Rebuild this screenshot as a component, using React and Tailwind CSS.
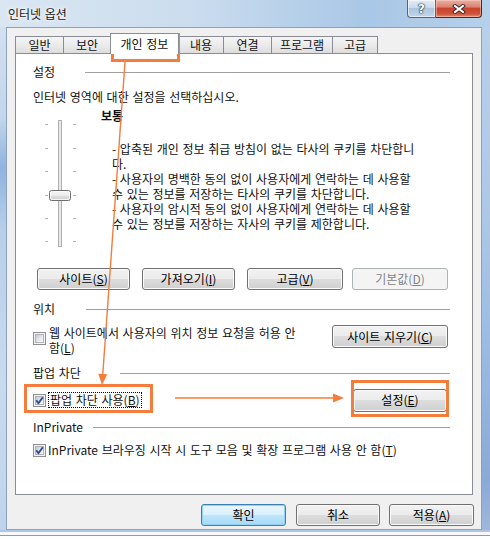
import React from "react";

function Btn({ children, className = "", disabled = false, def = false }) {
  let style;
  if (disabled) style = "border-[#adb2b5] bg-[#f4f4f4] text-[#838383]";
  else if (def)
    style =
      "border-[#3c7fb1] bg-[linear-gradient(#eaf6fd,#d9f0fc_50%,#bee6fd_50%,#a7d9f5)] shadow-[inset_0_0_0_1px_#8fd3f7] text-black";
  else
    style =
      "border-[#707070] bg-[linear-gradient(#f2f2f2,#ebebeb_50%,#dddddd_50%,#cfcfcf)] shadow-[inset_0_0_0_1px_#fbfbfb] text-black";
  return (
    <div className={`flex shrink-0 items-center justify-center rounded-[3px] border leading-none ${style} ${className}`}>
      {children}
    </div>
  );
}

function Check({ checked }) {
  return (
    <div className="relative h-[13px] w-[13px] shrink-0 border border-[#8f8f8f] bg-[#f4f4f4] p-px">
      <div className="h-full w-full border border-[#aeb3b9] bg-[linear-gradient(135deg,#c6cad0,#e4e6e9_50%,#f8f8f8)]" />
      {checked && (
        <svg className="absolute left-0 top-0" width="11" height="11" viewBox="0 0 11 11">
          <path d="M2.3 5.2 L4.4 8.2 L8.8 2.2" fill="none" stroke="#2a4a9a" strokeWidth="1.9" strokeLinejoin="round" />
        </svg>
      )}
    </div>
  );
}

function Group({ label, w, className = "" }) {
  return (
    <div className={`flex h-[20px] items-center ${className}`}>
      <div className={`shrink-0 leading-[16px] ${w}`}>{label}</div>
      <div className="h-px flex-1 bg-[#a0a0a0]" />
    </div>
  );
}

function Tab({ children, w, selected = false, noLeft = false, last = false }) {
  if (selected) {
    return (
      <div className={`relative z-10 -mb-px flex h-[21px] items-center justify-center border border-b-0 border-[#898c95] bg-white ${w}`}>
        {children}
      </div>
    );
  }
  return (
    <div
      className={`flex h-[17px] items-center justify-center border-t border-[#898c95] bg-[linear-gradient(#f5f5f5,#ebebeb_50%,#dddddd)] ${
        noLeft ? "" : "border-l"
      } ${last ? "border-r" : ""} ${w}`}
    >
      {children}
    </div>
  );
}

export default function App() {
  return (
    <div className="relative h-[539px] w-[490px] overflow-hidden bg-white font-['Noto_Sans_CJK_KR',sans-serif] text-[12px] text-[#111111] [word-spacing:1px]">
      {/* Title bar */}
      <div className="flex h-[27px] bg-[linear-gradient(90deg,#dae6f2,#cadcee_40%,#a9c7e6_75%,#b6d0ea)]">
        <div className="pl-[8px] pt-[6px] leading-[16px] text-[#1a1a1a] [text-shadow:0_0_6px_#ffffff,0_0_3px_#ffffff]">
          인터넷 옵션
        </div>
        <div className="ml-auto mr-[8px] flex items-start">
          <div className="flex h-[18px] w-[29px] items-center justify-center rounded-bl-[4px] border border-t-0 border-[#52677f] bg-[linear-gradient(#e4edf6,#cbdaea_45%,#aec5df_50%,#c0d6ec)] shadow-[inset_0_0_0_1px_rgba(255,255,255,0.55)]">
            <span className="font-['DejaVu_Sans',sans-serif] text-[12px] font-bold leading-none text-white [text-shadow:0_0_1px_#1c2a3a,0_0_2px_#1c2a3a,0_0_1px_#1c2a3a]">
              ?
            </span>
          </div>
          <div className="flex h-[18px] w-[46px] items-center justify-center rounded-br-[4px] border border-l-0 border-t-0 border-[#4a2a26] bg-[linear-gradient(#eab0a3,#dc8270_40%,#c8442d_50%,#cf5236_80%,#e28a6c)] shadow-[inset_0_0_0_1px_rgba(255,220,210,0.45)]">
            <svg width="14" height="10" viewBox="0 0 14 10">
              <path d="M3 2 L11 8 M11 2 L3 8" stroke="#3a2a2a" strokeWidth="4" strokeLinecap="square" />
              <path d="M3 2 L11 8 M11 2 L3 8" stroke="#ffffff" strokeWidth="2" strokeLinecap="square" />
            </svg>
          </div>
        </div>
      </div>

      {/* Body with frames */}
      <div className="flex h-[503px]">
        <div className="w-[6px] bg-[linear-gradient(#d2e0ef,#c3d6ec_18%,#8fb4de_28%,#b7cfe9_40%,#c8daee_70%,#bfd4ec)]" />
        <div className="flex w-[476px] flex-col border border-[#8da2bd] bg-[#f0f0f0] px-[8px]">
          {/* Tabs */}
          <div className="mt-[5px] flex h-[20px] items-end">
            <Tab w="w-[48px]">일반</Tab>
            <Tab w="w-[47px]">보안</Tab>
            <Tab w="w-[69px]" selected>
              개인 정보
            </Tab>
            <Tab w="w-[44px]" noLeft>
              내용
            </Tab>
            <Tab w="w-[48px]">연결</Tab>
            <Tab w="w-[61px]">프로그램</Tab>
            <Tab w="w-[46px]" last>
              고급
            </Tab>
          </div>

          {/* Panel */}
          <div className="flex h-[442px] flex-col border border-[#898c95] bg-white pl-[17px] pr-[22px]">
            <Group label="설정" w="w-[52px]" className="mt-[8px]" />
            <div className="mt-[6px] h-[18px] leading-[18px]">인터넷 영역에 대한 설정을 선택하십시오.</div>

            {/* Slider section */}
            <div className="flex h-[150px]">
              <svg className="ml-[10px] shrink-0" width="36" height="150" viewBox="0 0 36 150">
                <defs>
                  <linearGradient id="thumb" x1="0" y1="0" x2="0" y2="1">
                    <stop offset="0" stopColor="#f7f7f7" />
                    <stop offset="0.5" stopColor="#ececec" />
                    <stop offset="0.5" stopColor="#dedede" />
                    <stop offset="1" stopColor="#d2d2d2" />
                  </linearGradient>
                </defs>
                {[18, 42, 65, 89, 112, 135].map((y) => (
                  <g key={y}>
                    <rect x="2" y={y} width="3" height="1" fill="#b4b4b4" />
                    <rect x="30" y={y} width="3" height="1" fill="#b4b4b4" />
                  </g>
                ))}
                <rect x="15.5" y="14.5" width="3" height="126" fill="#e8e8e8" stroke="#b0b0b0" />
                <rect x="6.5" y="84.5" width="21" height="10" rx="2" fill="url(#thumb)" stroke="#707070" />
                <rect x="7.5" y="85.5" width="19" height="8" rx="1.5" fill="none" stroke="#fbfbfb" strokeOpacity="0.8" />
              </svg>
              <div className="ml-[21px] flex flex-col">
                <div className="mt-[2px] h-[16px] pl-[1px] font-bold leading-[16px]">보통</div>
                <div className="mt-[17px] whitespace-nowrap pl-[12px] leading-[15px]">
                  <div>- 압축된 개인 정보 취급 방침이 없는 타사의 쿠키를 차단합니</div>
                  <div>다.</div>
                  <div>- 사용자의 명백한 동의 없이 사용자에게 연락하는 데 사용할</div>
                  <div>수 있는 정보를 저장하는 타사의 쿠키를 차단합니다.</div>
                  <div>- 사용자의 암시적 동의 없이 사용자에게 연락하는 데 사용할</div>
                  <div>수 있는 정보를 저장하는 자사의 쿠키를 제한합니다.</div>
                </div>
              </div>
            </div>

            {/* Buttons row */}
            <div className="mt-[12px] flex h-[22px] pl-[4px]">
              <Btn className="h-[22px] w-[93px]">
                사이트(<u>S</u>)
              </Btn>
              <Btn className="ml-[12px] h-[22px] w-[93px]">
                가져오기(<u>I</u>)
              </Btn>
              <Btn className="ml-[12px] h-[22px] w-[96px]">
                고급(<u>V</u>)
              </Btn>
              <Btn className="ml-[9px] h-[22px] w-[96px]" disabled>
                기본값(<u>D</u>)
              </Btn>
            </div>

            <Group label="위치" w="w-[53px]" className="mt-[9px]" />
            <div className="mt-[6px] flex h-[28px] items-start">
              <div className="mt-[7px]">
                <Check />
              </div>
              <div className="ml-[3px] whitespace-nowrap leading-[15px]">
                <div>웹 사이트에서 사용자의 위치 정보 요청을 허용 안</div>
                <div>
                  함(<u>L</u>)
                </div>
              </div>
              <Btn className="ml-auto mr-[2px] h-[23px] w-[116px]">
                사이트 지우기(<u>C</u>)
              </Btn>
            </div>

            <Group label="팝업 차단" w="w-[87px]" className="mt-[10px]" />
            <div className="mt-[3px] flex h-[28px] items-center">
              <Check checked />
              <div className="ml-[2px] h-[16px] whitespace-nowrap border border-dotted border-black px-px leading-[14px]">
                팝업 차단 사용(<u>B</u>)
              </div>
              <Btn className="ml-auto mr-[3px] h-[23px] w-[94px]">
                설정(<u>E</u>)
              </Btn>
            </div>

            <Group label="InPrivate" w="w-[60px]" className="mt-[3px]" />
            <div className="mt-[4px] flex h-[18px] items-center">
              <Check checked />
              <div className="ml-[2px] whitespace-nowrap leading-[16px]">
                InPrivate 브라우징 시작 시 도구 모음 및 확장 프로그램 사용 안 함(<u>T</u>)
              </div>
            </div>
          </div>

          {/* Bottom buttons */}
          <div className="mt-[9px] flex h-[22px] justify-end">
            <Btn className="h-[22px] w-[85px]" def>
              확인
            </Btn>
            <Btn className="ml-[10px] h-[22px] w-[84px]">취소</Btn>
            <Btn className="ml-[9px] mr-[-1px] h-[22px] w-[85px]">
              적용(<u>A</u>)
            </Btn>
          </div>
        </div>
        <div className="w-[8px] bg-[linear-gradient(#b9d0ea,#abc7e7_40%,#9dbde4_60%,#8aa9d6_90%,#9fb7dc)]" />
      </div>

      {/* Bottom edge */}
      <div className="h-[2px] bg-[#adc6e4]" />
      <div className="h-[3px] bg-[#f7f9fb]" />
      <div className="h-px bg-[#9a9a9a]" />

      {/* Annotations */}
      <svg className="pointer-events-none absolute left-0 top-0" width="490" height="539" viewBox="0 0 490 539">
        <g stroke="#f47c3c" fill="none">
          <rect x="112.5" y="34.5" width="66" height="26" strokeWidth="3" />
          <rect x="25.5" y="385.5" width="126" height="26" strokeWidth="3" />
          <rect x="352.5" y="381.5" width="95" height="34" strokeWidth="3" />
          <line x1="125" y1="62" x2="102.8" y2="374" strokeWidth="1.4" />
          <line x1="175" y1="398" x2="334" y2="398" strokeWidth="1.4" />
        </g>
        <polygon points="102,385 98.3,373.7 107.3,374.3" fill="#f47c3c" />
        <polygon points="344,398 333,393.5 333,402.5" fill="#f47c3c" />
      </svg>
    </div>
  );
}
